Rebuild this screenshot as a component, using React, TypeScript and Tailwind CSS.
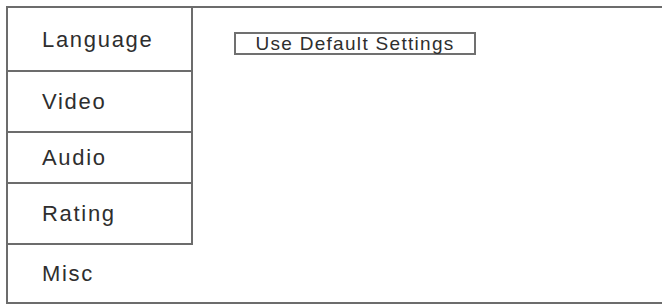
const tabs = [
  { label: 'Language', h: 'h-[64px]' },
  { label: 'Video', h: 'h-[61px]' },
  { label: 'Audio', h: 'h-[51px]' },
  { label: 'Rating', h: 'h-[61px]' },
]

export default function App() {
  return (
    <div className="w-[662px] h-[306px] bg-white pt-[6px] pl-[6px] font-['Liberation_Sans',Arial,sans-serif] text-[#2e2e2e]">
      <div className="w-[656px] h-[298px] border-l-2 border-t-2 border-b-2 border-[#6c6c6c] flex">
        {/* Sidebar */}
        <div className="w-[185px] flex flex-col">
          {tabs.map((t) => (
            <div
              key={t.label}
              className={`${t.h} flex items-center pl-[34px] border-r-2 border-b-2 border-[#6c6c6c] text-[22px] tracking-[1.7px]`}
            >
              {t.label}
            </div>
          ))}
          <div className="flex-1 flex items-center pl-[34px] text-[22px] tracking-[1.7px]">Misc</div>
        </div>

        {/* Content */}
        <div className="flex-1 pt-[24px] pl-[41px]">
          <div className="w-[242px] h-[23px] border-2 border-[#707070] flex items-center justify-center text-[19px] tracking-[1.3px] leading-none">
            Use Default Settings
          </div>
        </div>
      </div>
    </div>
  )
}
